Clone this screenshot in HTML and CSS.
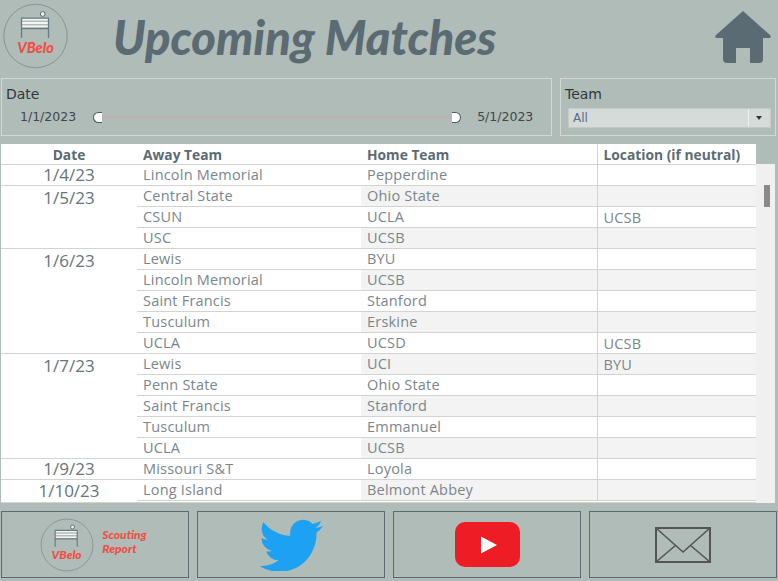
FILE: index.html
```html
<!DOCTYPE html>
<html>
<head>
    <title>Upcoming Matches</title>
    <link rel="stylesheet" href="styles.css">
</head>
<body>
    <div class="dashboard">
        <div class="header">
            <svg class="logo" viewBox="0 0 66 66">
                <circle cx="32.5" cy="33" r="31.7" fill="none" stroke="#84949a" stroke-width="1"/>
                <circle cx="39.7" cy="11" r="2.4" fill="#eef0ee" stroke="#5b6b73" stroke-width="1"/>
                <path d="M18.5 16.5h27M18.5 20h27M18.5 23.5h27" stroke="#f4f5f3" stroke-width="1.8" fill="none"/>
                <path d="M18.5 15v20M45.5 15v20M18 15.2h28M18 25.5h28" stroke="#687a82" stroke-width="1.3" fill="none"/>
                <text x="32.5" y="50" class="logo-text" text-anchor="middle">VBelo</text>
            </svg>
            <h1 class="page-title">Upcoming Matches</h1>
            <svg class="home-icon" viewBox="0 0 58 52">
                <path d="M29 0 L56 24 Q58 27 55 27 L49 27 L49 48 Q49 52 45 52 L36 52 L36 37 L22 37 L22 52 L13 52 Q9 52 9 48 L9 27 L3 27 Q0 27 2 24 Z" fill="#5b6b73"/>
            </svg>
        </div>

        <div class="filters">
            <div class="filter-box date-filter">
                <div class="filter-label">Date</div>
                <div class="slider-row">
                    <span class="slider-value">1/1/2023</span>
                    <div class="slider-track">
                        <span class="handle handle-left"></span>
                        <span class="handle handle-right"></span>
                    </div>
                    <span class="slider-value">5/1/2023</span>
                </div>
            </div>
            <div class="filter-box team-filter">
                <div class="filter-label">Team</div>
                <div class="select-box">
                    <span class="select-text">All</span>
                    <span class="select-arrow"></span>
                </div>
            </div>
        </div>

        <div class="table-wrap">
            <div class="table-clip">
                <table class="match-table">
                    <colgroup>
                        <col class="col-date">
                        <col class="col-away">
                        <col class="col-home">
                        <col class="col-loc">
                    </colgroup>
                    <thead>
                        <tr>
                            <th class="center">Date</th>
                            <th>Away Team</th>
                            <th>Home Team</th>
                            <th class="loc">Location (if neutral)</th>
                        </tr>
                    </thead>
                    <tbody>
                        <tr><td class="date">1/4/23</td><td>Lincoln Memorial</td><td>Pepperdine</td><td class="loc"></td></tr>
                        <tr class="band"><td class="date multi" rowspan="3">1/5/23</td><td>Central State</td><td>Ohio State</td><td class="loc"></td></tr>
                        <tr><td>CSUN</td><td>UCLA</td><td class="loc">UCSB</td></tr>
                        <tr class="band"><td>USC</td><td>UCSB</td><td class="loc"></td></tr>
                        <tr><td class="date multi" rowspan="5">1/6/23</td><td>Lewis</td><td>BYU</td><td class="loc"></td></tr>
                        <tr class="band"><td>Lincoln Memorial</td><td>UCSB</td><td class="loc"></td></tr>
                        <tr><td>Saint Francis</td><td>Stanford</td><td class="loc"></td></tr>
                        <tr class="band"><td>Tusculum</td><td>Erskine</td><td class="loc"></td></tr>
                        <tr><td>UCLA</td><td>UCSD</td><td class="loc">UCSB</td></tr>
                        <tr class="band"><td class="date multi" rowspan="5">1/7/23</td><td>Lewis</td><td>UCI</td><td class="loc">BYU</td></tr>
                        <tr><td>Penn State</td><td>Ohio State</td><td class="loc"></td></tr>
                        <tr class="band"><td>Saint Francis</td><td>Stanford</td><td class="loc"></td></tr>
                        <tr><td>Tusculum</td><td>Emmanuel</td><td class="loc"></td></tr>
                        <tr class="band"><td>UCLA</td><td>UCSB</td><td class="loc"></td></tr>
                        <tr><td class="date">1/9/23</td><td>Missouri S&amp;T</td><td>Loyola</td><td class="loc"></td></tr>
                        <tr class="band"><td class="date open">1/10/23</td><td>Long Island</td><td>Belmont Abbey</td><td class="loc"></td></tr>
                    </tbody>
                </table>
            </div>
            <div class="scroll-col">
                <div class="scroll-head"></div>
                <div class="scroll-track"><span class="scroll-thumb"></span></div>
            </div>
        </div>

        <div class="link-row">
            <div class="link-btn scout-btn">
                <svg class="logo-small" viewBox="0 0 66 66">
                    <circle cx="33" cy="33" r="31.7" fill="none" stroke="#84949a" stroke-width="1.1"/>
                    <circle cx="39.7" cy="11" r="2.4" fill="#eef0ee" stroke="#5b6b73" stroke-width="1.1"/>
                    <path d="M18.5 16.5h27M18.5 20h27M18.5 23.5h27" stroke="#f4f5f3" stroke-width="1.8" fill="none"/>
                    <path d="M18.5 15v20M45.5 15v20M18 15.2h28M18 25.5h28" stroke="#687a82" stroke-width="1.4" fill="none"/>
                    <text x="32.5" y="50" class="logo-text" text-anchor="middle">VBelo</text>
                </svg>
                <div class="scout-text">Scouting<br>Report</div>
            </div>
            <div class="link-btn">
                <svg class="twitter-icon" viewBox="0 1.6 24 19.9">
                    <path fill="#1da1f2" d="M23.953 4.57a10 10 0 01-2.825.775 4.958 4.958 0 002.163-2.723c-.951.555-2.005.959-3.127 1.184a4.92 4.92 0 00-8.384 4.482C7.69 8.095 4.067 6.13 1.64 3.162a4.822 4.822 0 00-.666 2.475c0 1.71.87 3.213 2.188 4.096a4.904 4.904 0 01-2.228-.616v.06a4.923 4.923 0 003.946 4.827 4.996 4.996 0 01-2.212.085 4.936 4.936 0 004.604 3.417 9.867 9.867 0 01-6.102 2.105c-.39 0-.779-.023-1.17-.067a13.995 13.995 0 007.557 2.209c9.053 0 13.998-7.496 13.998-13.985 0-.21 0-.42-.015-.63A9.935 9.935 0 0024 4.59z"/>
                </svg>
            </div>
            <div class="link-btn">
                <svg class="youtube-icon" viewBox="0 0 65 45">
                    <rect width="65" height="45" rx="10" fill="#ee1c25"/>
                    <path d="M26 14.5 L42 23 L26 31.5 Z" fill="#fff"/>
                </svg>
            </div>
            <div class="link-btn">
                <svg class="mail-icon" viewBox="0 0 56 36">
                    <rect x="1" y="1" width="54" height="34" fill="none" stroke="#555" stroke-width="2"/>
                    <path d="M1 1 L28 25 L55 1 M1 35 L21 18 M55 35 L35 18" fill="none" stroke="#555" stroke-width="1.6"/>
                </svg>
            </div>
        </div>
    </div>
</body>
</html>
```

FILE: styles.css
```css
* {
    margin: 0;
    padding: 0;
    box-sizing: border-box;
}
html, body {
    height: 100%;
}
body {
    background: #b0bcb7;
    font-family: 'Open Sans', sans-serif;
    overflow: hidden;
}
.dashboard {
    width: 778px;
    height: 581px;
    display: flex;
    flex-direction: column;
}
.header {
    height: 78px;
    display: flex;
    align-items: flex-start;
    padding: 3px 6px 0 3px;
}
.logo {
    width: 66px;
    height: 66px;
    flex: none;
}
.logo-small {
    width: 54px;
    height: 54px;
    flex: none;
}
.logo-text {
    font-family: 'Lato', sans-serif;
    font-weight: 900;
    font-style: italic;
    font-size: 14.5px;
    fill: #f04e45;
}
.page-title {
    font-family: 'Lato', sans-serif;
    font-weight: 900;
    font-style: italic;
    font-size: 47px;
    line-height: 60px;
    color: #5b6b73;
    margin-left: 44px;
    margin-top: 4px;
    flex: 1;
}
.home-icon {
    width: 58px;
    height: 52px;
    margin-top: 8px;
    flex: none;
}
.filters {
    display: flex;
    gap: 8px;
    padding: 0 2px 0 1px;
    height: 58px;
}
.filter-box {
    border: 1px solid #d3d8d1;
}
.date-filter {
    width: 551px;
    padding: 6px 4px;
}
.team-filter {
    width: 216px;
    padding: 6px 4px 0 7px;
}
.filter-label {
    font-family: 'DejaVu Sans', sans-serif;
    font-size: 14px;
    line-height: 18px;
    color: #2f3640;
}
.team-filter .filter-label {
    margin-left: -3px;
}
.slider-row {
    display: flex;
    align-items: center;
    margin-top: 6px;
}
.slider-value {
    font-family: 'DejaVu Sans', sans-serif;
    font-size: 12.5px;
    line-height: 16px;
    color: #3f4650;
    white-space: nowrap;
}
.slider-value:first-child {
    margin-left: 14px;
}
.slider-track {
    width: 368px;
    height: 4px;
    background: #b9b3b3;
    margin: 0 16px 0 17px;
    display: flex;
    justify-content: space-between;
    align-items: center;
}
.handle {
    display: block;
    width: 9px;
    height: 11px;
    background: #fff;
    border: 1px solid #4f5a60;
}
.handle-left {
    border-radius: 6px 0 0 6px;
    border-right: none;
}
.handle-right {
    border-radius: 0 6px 6px 0;
    border-left: none;
}
.select-box {
    margin-top: 5px;
    height: 20px;
    background: #d5dbd8;
    border: 1px solid #c4cbc7;
    display: flex;
    align-items: center;
    justify-content: space-between;
}
.select-text {
    font-family: 'DejaVu Sans', sans-serif;
    font-size: 12px;
    color: #5b6b8a;
    padding-left: 4px;
}
.select-arrow {
    width: 22px;
    height: 18px;
    border-left: 1px solid #eef0ee;
    position: relative;
}
.select-arrow::after {
    content: "";
    position: absolute;
    left: 7px;
    top: 7px;
    border-left: 3.5px solid transparent;
    border-right: 3.5px solid transparent;
    border-top: 4px solid #333;
}
.table-wrap {
    display: flex;
    margin-top: 8px;
    margin-left: 1px;
    height: 359px;
    width: 774px;
}
.table-clip {
    width: 755px;
    height: 359px;
    overflow: hidden;
    background: #fff;
    border-bottom: 1px solid #d3d3cf;
}
.match-table {
    width: 755px;
    table-layout: fixed;
    border-collapse: collapse;
    font-size: 14.5px;
    letter-spacing: 0.2px;
    color: #7a868c;
}
.col-date { width: 136px; }
.col-away { width: 224px; }
.col-home { width: 236px; }
.col-loc { width: 159px; }
.match-table th {
    height: 20px;
    text-align: left;
    font-size: 13.8px;
    font-weight: 700;
    letter-spacing: 0;
    color: #5b6b73;
    padding: 1px 6px 0;
    line-height: 19px;
    border-bottom: 1px solid #d3d3cf;
    white-space: nowrap;
}
.match-table th.center {
    text-align: center;
}
.match-table td {
    height: 21px;
    padding: 0 6px;
    line-height: 20px;
    border-bottom: 1px solid #d3d3cf;
    white-space: nowrap;
    vertical-align: middle;
}
.match-table td.date {
    font-size: 17px;
    letter-spacing: 0;
    text-align: center;
    vertical-align: top;
    background: #fff;
    color: #66747b;
}
.match-table td.multi {
    padding-top: 2px;
}
.match-table tr.band td.open {
    background: #fff;
    border-bottom-color: #fff;
    padding-top: 1px;
    line-height: 19px;
}
.match-table tr.band td:nth-last-child(-n+2) {
    background: #f3f3f3;
}
.match-table .loc {
    border-left: 1px solid #d3d3cf;
}
.match-table td.loc {
    padding-top: 2px;
    line-height: 18px;
}
.scroll-col {
    width: 19px;
    display: flex;
    flex-direction: column;
}
.scroll-head {
    height: 20px;
}
.scroll-track {
    flex: 1;
    background: #f0f0f0;
    padding: 21px 0 0 8px;
}
.scroll-thumb {
    display: block;
    width: 6px;
    height: 22px;
    background: #8a8a8a;
}
.link-row {
    display: flex;
    gap: 8px;
    margin-top: 8px;
    padding-left: 1px;
}
.link-btn {
    width: 188px;
    height: 67px;
    border: 1px solid #5b6b73;
    display: flex;
    align-items: center;
    justify-content: center;
}
.scout-btn {
    padding-right: 3px;
}
.scout-text {
    font-family: 'Lato', sans-serif;
    font-weight: 900;
    font-style: italic;
    font-size: 12px;
    line-height: 14px;
    color: #f04e45;
    margin-left: 8px;
    margin-bottom: 6px;
}
.twitter-icon {
    width: 64px;
    height: 53px;
}
.youtube-icon {
    width: 65px;
    height: 45px;
}
.mail-icon {
    width: 56px;
    height: 36px;
}
```
